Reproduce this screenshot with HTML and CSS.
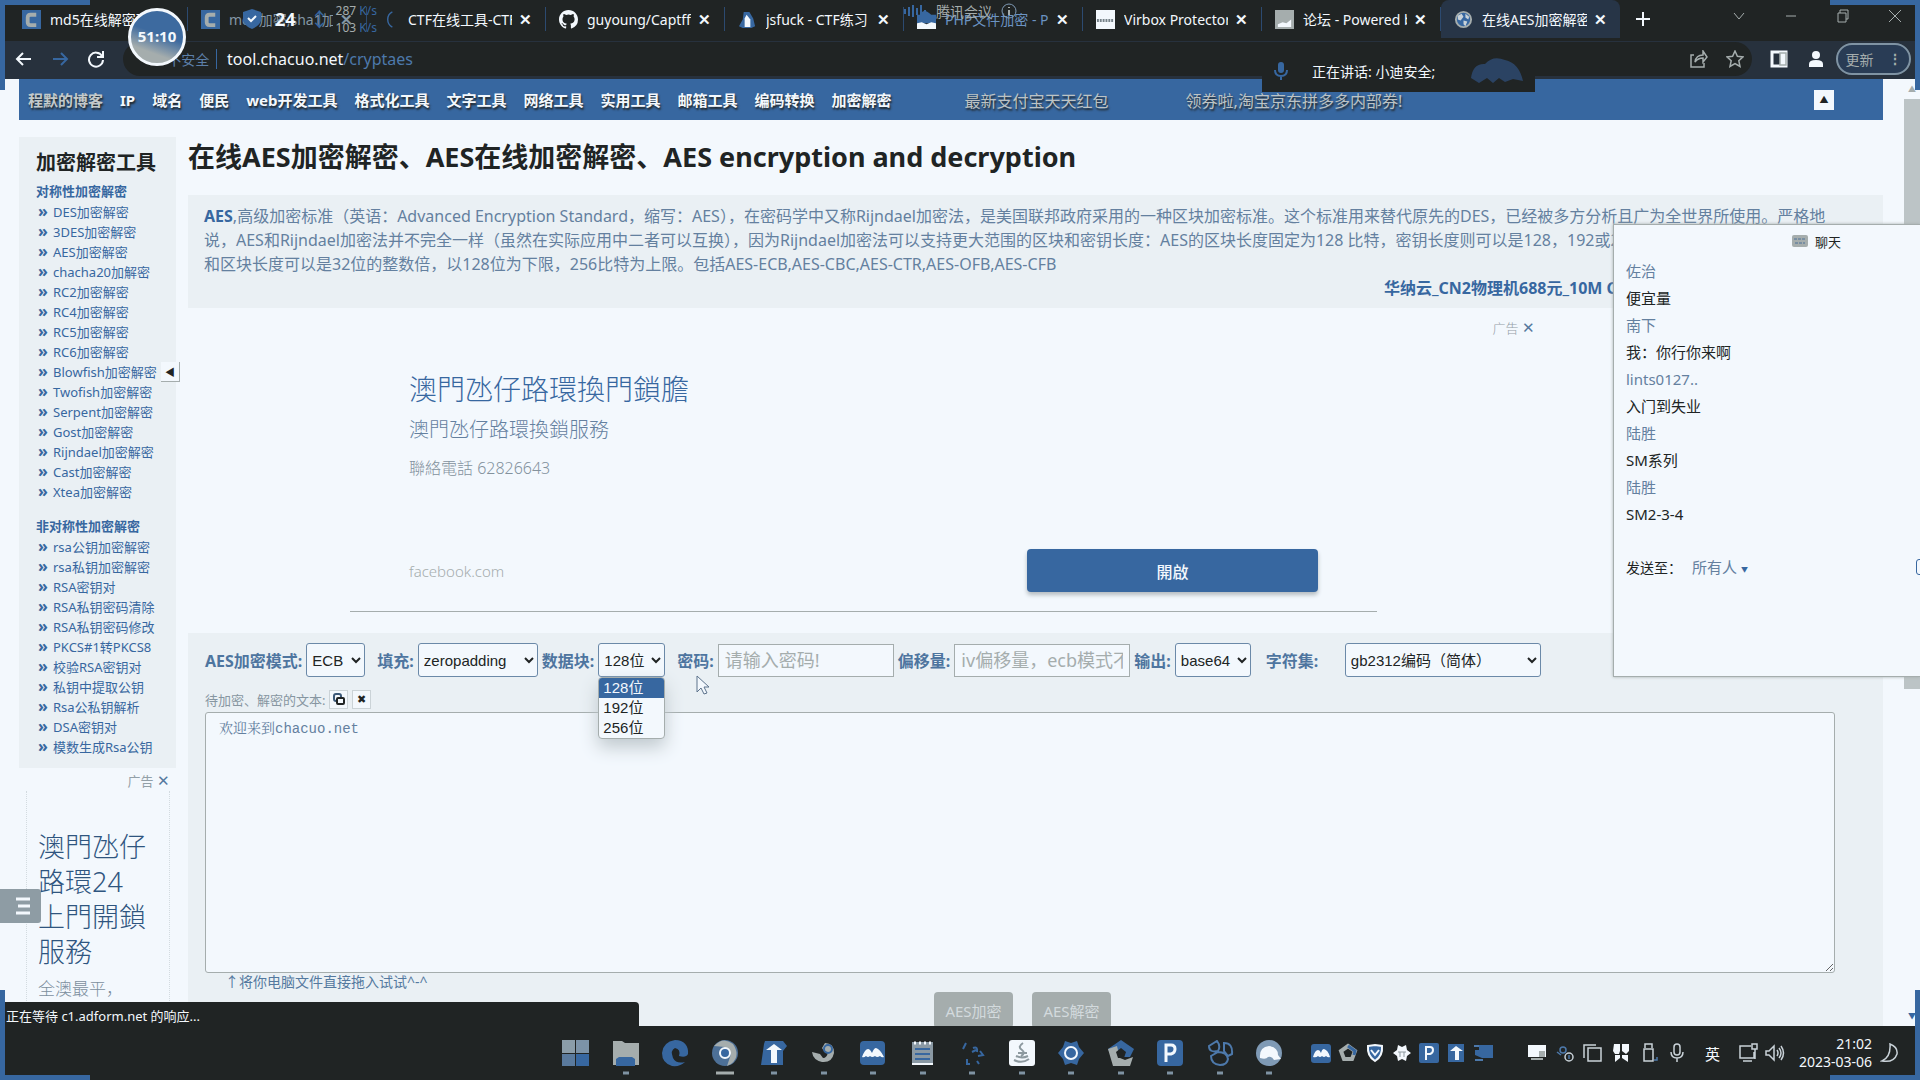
FILE: index.html
```html
<!DOCTYPE html>
<html lang="zh-CN">
<head>
<meta charset="utf-8">
<title>在线AES加密解密</title>
<link rel="stylesheet" href="styles.css">
</head>
<body>
<header class="tabstrip">
  <div class="tab"><svg class="fav" viewBox="0 0 20 20"><path fill="#3767a0" d="M0 0h20v20H0z"/><path d="M15 5H9Q6 5 6 8v5q0 3 3 3h6" fill="none" stroke="#a5adad" stroke-width="4"/></svg><span class="tab-title">md5在线解密破解</span></div>
  <div class="tab"><svg class="fav" viewBox="0 0 20 20"><path fill="#3767a0" d="M0 0h20v20H0z"/><path d="M15 5H9Q6 5 6 8v5q0 3 3 3h6" fill="none" stroke="#a5adad" stroke-width="4"/></svg><span class="tab-title dim">md5加密,sha1加</span><button class="x dim" aria-label="关闭">✕</button></div>
  <div class="tab"><svg class="fav" viewBox="0 0 20 20"><path d="M13 2A9 9 0 0 0 13 18" fill="none" stroke="#3767a0" stroke-width="1.5"/></svg><span class="tab-title">CTF在线工具-CTF</span><button class="x" aria-label="关闭">✕</button></div>
  <div class="tab"><svg class="fav" viewBox="0 0 16 16"><path fill="#f3f8fd" d="M8 0C3.58 0 0 3.58 0 8c0 3.54 2.29 6.53 5.47 7.59.4.07.55-.17.55-.38v-1.49c-2.01.37-2.53-.49-2.69-.94-.09-.23-.48-.94-.82-1.13-.28-.15-.68-.52-.01-.53.63-.01 1.08.58 1.23.82.72 1.21 1.87.87 2.33.66.07-.52.28-.87.51-1.07-1.78-.2-3.64-.89-3.64-3.95 0-.87.31-1.59.82-2.15-.08-.2-.36-1.02.08-2.12 0 0 .67-.21 2.2.82a7.6 7.6 0 0 1 4 0c1.53-1.04 2.2-.82 2.2-.82.44 1.1.16 1.92.08 2.12.51.56.82 1.27.82 2.15 0 3.07-1.87 3.75-3.65 3.95.29.25.54.73.54 1.48v2.2c0 .21.15.46.55.38A8 8 0 0 0 16 8c0-4.42-3.58-8-8-8z"/></svg><span class="tab-title">guyoung/Captfff</span><button class="x" aria-label="关闭">✕</button></div>
  <div class="tab"><svg class="fav" viewBox="0 0 20 20"><path fill="#3767a0" d="M6 2h6l4 7 2 8-4 2H5l-4-2 4-7z"/><path fill="#f3f8fd" d="M9 5l4 5v8H7V9z"/></svg><span class="tab-title">jsfuck - CTF练习</span><button class="x" aria-label="关闭">✕</button></div>
  <div class="tab"><svg class="fav" viewBox="0 0 20 20"><path fill="#3767a0" d="M3 5q4-8 12 0h5v9H0V5z"/><path fill="#f3f8fd" d="M0 14l5-1 5 2 5-2 5 1v6H0z"/></svg><span class="tab-title blue">PHP文件加密 - P</span><button class="x" aria-label="关闭">✕</button></div>
  <div class="tab"><svg class="fav" viewBox="0 0 20 20"><path fill="#f3f8fd" d="M0 0h20v20H0z"/><path d="M1 11h18" stroke="#77838a" stroke-width="3" stroke-dasharray="2 1"/></svg><span class="tab-title">Virbox Protector</span><button class="x" aria-label="关闭">✕</button></div>
  <div class="tab"><svg class="fav" viewBox="0 0 20 20"><path fill="#a5adad" d="M0 0h20v20H0z"/><path fill="#f3f8fd" d="M3 15l5-2 4 1 5-4v8H3z"/></svg><span class="tab-title">论坛 - Powered b</span><button class="x" aria-label="关闭">✕</button></div>
  <div class="tab active"><svg class="fav" viewBox="0 0 20 20"><circle cx="10" cy="10" r="8" fill="#3767a0" stroke="#a5adad" stroke-width="2"/><path fill="#c9d2d8" d="M4 6l4-2 2 3-3 4-3-1zM12 4l4 3-1 3-3-2zM10 11l4 1-2 5-2-2z"/></svg><span class="tab-title">在线AES加密解密</span><button class="x" aria-label="关闭">✕</button></div>
  <button class="newtab" aria-label="新标签页"><svg width="14" height="14" viewBox="0 0 14 14"><path d="M7 0v14M0 7h14" stroke="#f3f8fd" stroke-width="2"/></svg></button>
  <div class="window-buttons">
    <svg viewBox="0 0 14 14"><path d="M2 4l5 6 5-6"/></svg>
    <svg viewBox="0 0 14 14"><path d="M2 7h10"/></svg>
    <svg viewBox="0 0 14 14"><path d="M2 4h8v9H2zM4 4V1h8v9h-2"/></svg>
    <svg viewBox="0 0 14 14"><path d="M1 1l12 12M13 1L1 13"/></svg>
  </div>
</header>

<div class="toolbar">
  <button class="tb" aria-label="后退"><svg width="18" height="18" viewBox="0 0 18 18"><path d="M16 9H2M8 3L2 9l6 6"/></svg></button>
  <button class="tb off" aria-label="前进"><svg width="18" height="18" viewBox="0 0 18 18"><path d="M2 9h14M10 3l6 6-6 6"/></svg></button>
  <button class="tb" aria-label="刷新"><svg width="18" height="18" viewBox="0 0 18 18"><path d="M15 6A7 7 0 1 0 16 10M16 1v6h-6"/></svg></button>
  <div class="omnibox">
    <span class="insecure">▲ 不安全</span>
    <span class="url">tool.chacuo.net<span>/cryptaes</span></span>
    <svg class="share" width="18" height="18" viewBox="0 0 18 18"><path d="M4 5H1v12h13v-4M5 12q1-7 8-7V1l4 6-4 5V8q-5 0-8 4z"/></svg>
    <svg width="18" height="18" viewBox="0 0 18 18"><path d="M9 1l2.400 5.300 5.600.600-4.200 3.800 1.200 5.700L9 13.500l-5 2.900 1.200-5.700L1 6.900l5.600-.600z"/></svg>
  </div>
  <svg class="side" width="18" height="18" viewBox="0 0 18 18"><path d="M2 2h14v14H2z" stroke="#f3f8fd" stroke-width="3"/><path d="M10 3h6v12h-6z" fill="#f3f8fd"/></svg>
  <svg class="user" width="18" height="18" viewBox="0 0 18 18"><circle cx="9" cy="5" r="4"/><path d="M2 17v-3q0-4 7-4t7 4v3z"/></svg>
  <button class="update">更新 <b>⋮</b></button>
</div>

<main class="viewport">
  <nav class="sitenav">
    <a class="own" href="#">程默的博客</a><a href="#">IP</a><a href="#">域名</a><a href="#">便民</a><a href="#">web开发工具</a><a href="#">格式化工具</a><a href="#">文字工具</a><a href="#">网络工具</a><a href="#">实用工具</a><a href="#">邮箱工具</a><a href="#">编码转换</a><a href="#">加密解密</a>
    <a class="promo first" href="#">最新支付宝天天红包</a><a class="promo" href="#">领券啦,淘宝京东拼多多内部券!</a>
    <button class="collapse" aria-label="收起">▲</button>
  </nav>
  <div class="columns">
    <aside class="left">
      <section class="menu">
        <h2>加密解密工具</h2>
        <h3>对称性加密解密</h3>
        <ul>
          <li><a href="#">DES加密解密</a></li><li><a href="#">3DES加密解密</a></li><li><a href="#">AES加密解密</a></li><li><a href="#">chacha20加解密</a></li><li><a href="#">RC2加密解密</a></li><li><a href="#">RC4加密解密</a></li><li><a href="#">RC5加密解密</a></li><li><a href="#">RC6加密解密</a></li><li><a href="#">Blowfish加密解密</a></li><li><a href="#">Twofish加密解密</a></li><li><a href="#">Serpent加密解密</a></li><li><a href="#">Gost加密解密</a></li><li><a href="#">Rijndael加密解密</a></li><li><a href="#">Cast加密解密</a></li><li><a href="#">Xtea加密解密</a></li>
        </ul>
        <h3>非对称性加密解密</h3>
        <ul>
          <li><a href="#">rsa公钥加密解密</a></li><li><a href="#">rsa私钥加密解密</a></li><li><a href="#">RSA密钥对</a></li><li><a href="#">RSA私钥密码清除</a></li><li><a href="#">RSA私钥密码修改</a></li><li><a href="#">PKCS#1转PKCS8</a></li><li><a href="#">校验RSA密钥对</a></li><li><a href="#">私钥中提取公钥</a></li><li><a href="#">Rsa公私钥解析</a></li><li><a href="#">DSA密钥对</a></li><li><a href="#">模数生成Rsa公钥</a></li>
        </ul>
        <button class="fold" aria-label="折叠">◀</button>
      </section>
      <section class="side-ad">
        <div class="adtag">广告 <b>✕</b></div>
        <div class="side-ad-box">
          <p class="side-ad-title">澳門氹仔<br>路環24<br>上門開鎖<br>服務</p>
          <p class="side-ad-text">全澳最平，</p>
        </div>
      </section>
    </aside>
    <article class="content">
      <h1>在线AES加密解密、AES在线加密解密、AES encryption and decryption</h1>
      <section class="intro">
        <p><strong>AES</strong>,高级加密标准（英语：Advanced Encryption Standard，缩写：AES），在密码学中又称Rijndael加密法，是美国联邦政府采用的一种区块加密标准。这个标准用来替代原先的DES，已经被多方分析且广为全世界所使用。严格地<br>说，AES和Rijndael加密法并不完全一样（虽然在实际应用中二者可以互换），因为Rijndael加密法可以支持更大范围的区块和密钥长度：AES的区块长度固定为128 比特，密钥长度则可以是128，192或256比特；<br>和区块长度可以是32位的整数倍，以128位为下限，256比特为上限。包括AES-ECB,AES-CBC,AES-CTR,AES-OFB,AES-CFB</p>
        <a class="cloud" href="#">华纳云_CN2物理机688元_10M CN2</a>
      </section>
      <section class="banner">
        <div class="adtag">广告 <b>✕</b></div>
        <div class="banner-body">
          <p class="b-title">澳門氹仔路環換門鎖膽</p>
          <p class="b-sub">澳門氹仔路環換鎖服務</p>
          <p class="b-tel">聯絡電話 62826643</p>
          <div class="b-foot"><span>facebook.com</span><button>開啟</button></div>
        </div>
      </section>
      <form class="tool">
        <div class="fields">
          <label for="mode">AES加密模式:</label><select id="mode" class="w60 wide"><option>ECB</option></select>
          <label for="pad">填充:</label><select id="pad" class="w120"><option>zeropadding</option></select>
          <label for="block">数据块:</label>
          <div class="combo wide"><select id="block" class="w68"><option>128位</option></select>
            <ul class="options"><li class="on">128位</li><li>192位</li><li>256位</li></ul></div>
          <label for="pwd">密码:</label><input id="pwd" placeholder="请输入密码!">
          <label for="iv">偏移量:</label><input id="iv" placeholder="iv偏移量，ecb模式不用">
          <label for="out">输出:</label><select id="out" class="w76 wide"><option>base64</option></select>
          <label for="cs" class="charset">字符集:</label><select id="cs" class="w196"><option>gb2312编码（简体）</option></select>
        </div>
        <div class="source"><label for="src">待加密、解密的文本:</label>
          <button type="button" aria-label="复制"><svg width="12" height="12" viewBox="0 0 12 12"><rect x="1" y="1" width="7" height="7" rx="2" fill="none" stroke="#3b5878" stroke-width="2"/><rect x="4" y="5" width="7" height="6" rx="1" fill="#f3f8fd" stroke="#202424" stroke-width="2"/></svg></button>
          <button type="button" aria-label="清空">✖</button></div>
        <textarea id="src">欢迎来到chacuo.net</textarea>
        <p class="hint">↑将你电脑文件直接拖入试试^-^</p>
        <div class="actions"><button type="button">AES加密</button><button type="button">AES解密</button></div>
      </form>
    </article>
  </div>
  <div class="scrollbar"><span>▲</span><i></i><span class="down">▼</span></div>
  <button class="float-menu" aria-label="目录"><svg width="14" height="18" viewBox="0 0 14 18"><path d="M0 2h14M2 9h12M0 16h14" stroke="#f3f8fd" stroke-width="3"/></svg></button>
  <div class="status">正在等待 c1.adform.net 的响应...</div>
</main>

<footer class="taskbar">
  <div class="apps">
    <svg viewBox="0 0 28 38"><path fill="#8b9da9" d="M0 0h13v13H0z"/><path fill="#7c93a8" d="M14 0h13v13H14z"/><path fill="#5a7a9d" d="M0 14h13v12H0z"/><path fill="#3767a0" d="M14 14h13v12H14z"/></svg>
    <svg viewBox="0 0 28 38"><path fill="#a5adad" d="M1 1h9l3 2h14v22H1z"/><path fill="#3767a0" d="M4 26v-7l3-2h13l3 2v7z"/><path class="dot" d="M11 33h6"/></svg>
    <svg viewBox="0 0 28 38"><path fill="#3767a0" d="M14 0C23 0 28 6 27 14q-2 4-9 2 2-7-4-8-5 2-2 10 3 6 12 4-5 5-13 4Q1 23 1 13 2 2 14 0z"/></svg>
    <svg viewBox="0 0 28 38"><circle cx="14" cy="13" r="13" fill="#4d7097"/><path fill="#a5adad" d="M3 6Q12-4 22 4q8 12-2 20l-4 2 4-12L14 7z"/><circle cx="14" cy="13" r="5" fill="#3767a0" stroke="#f3f8fd" stroke-width="2"/><path d="M5 33h18" stroke="#a5adad" stroke-width="3"/></svg>
    <svg viewBox="0 0 28 38"><path fill="#3767a0" d="M5 1h18l4 5-4 5v14H1L4 4z"/><path fill="#f3f8fd" d="M14 4l8 6h-5v13h-6V10H6z"/><path class="dot" d="M11 33h6"/></svg>
    <svg viewBox="0 0 28 38"><path fill="#a5adad" d="M15 3q9 0 9 10-2 10-12 9Q3 20 2 12l8 2 3 4q4 0 5-6-4 0-6-4z"/><circle cx="18" cy="9" r="4" fill="none" stroke="#3767a0" stroke-width="2"/><path class="dot" d="M11 33h6"/></svg>
    <svg viewBox="0 0 28 38"><rect x="1" y="1" width="25" height="24" rx="4" fill="#3767a0"/><path fill="#f3f8fd" d="M3 17q3-8 6-8 2 0 4 4 2-5 4-5 4 1 8 9-2 1-4-1-3 2-5 0-3 2-5 0-2 2-4 0-2 2-4 1z"/><path class="dot" d="M11 33h6"/></svg>
    <svg viewBox="0 0 28 38"><path fill="#8a99a4" d="M3 2h21v23H3z"/><path d="M5 3h2m3 0h2m3 0h2m3 0h2" stroke="#f3f8fd" stroke-width="3"/><path d="M6 9h15M6 14h15M6 19h15" stroke="#3767a0" stroke-width="2"/><path d="M3 24h21" stroke="#f3f8fd" stroke-width="2"/><path class="dot" d="M11 33h6"/></svg>
    <svg viewBox="0 0 28 38"><path d="M8 3L5 9m10-1q5-2 4 4m-5 0l4-2m4 1l3 4-5 1M9 19v4m-1 1h4m7-3l2 3" fill="none" stroke="#3767a0" stroke-width="2"/><path class="dot" d="M11 33h6"/></svg>
    <svg viewBox="0 0 28 38"><rect x="1" width="26" height="26" rx="3" fill="#f3f8fd"/><path d="M15 3q-6 4-1 7 4 3-1 6M8 16q6 3 12 0M6 20q8 4 15-1M10 13h9" fill="none" stroke="#8d999f" stroke-width="2"/><path class="dot" d="M11 33h6"/></svg>
    <svg viewBox="0 0 28 38"><path fill="#3767a0" d="M8 1l6 2 6-2 2 6 5 6-5 6-2 6-6-2-6 2-2-6-5-6 5-6z"/><circle cx="14" cy="13" r="6" fill="#3767a0" stroke="#f3f8fd" stroke-width="2"/><path class="dot" d="M11 33h6"/></svg>
    <svg viewBox="0 0 28 38"><path fill="#3767a0" d="M14 0l13 9-4 8H5L1 9z"/><path fill="#a5adad" d="M1 9l9-3 3 12 5 2 8-3-3 9H6z"/><path fill="#202424" d="M14 8l5 4-2 6h-6l-2-6z"/><path class="dot" d="M11 33h6"/></svg>
    <svg viewBox="0 0 28 38"><rect x="1" width="26" height="26" rx="4" fill="#3767a0"/><path d="M10 22V5h5q4 0 4 4t-4 5h-5" fill="none" stroke="#f3f8fd" stroke-width="3"/><path class="dot" d="M11 33h6"/></svg>
    <svg viewBox="0 0 28 38"><path d="M11 1q4 5 1 10Q3 13 3 6zM18 3q9 0 8 11l-4 2-4-5zM12 12q9 0 10 7-1 6-8 6-9-1-9-9z" fill="none" stroke="#4d79ab" stroke-width="2"/><path class="dot" d="M11 33h6"/></svg>
    <svg viewBox="0 0 28 38"><circle cx="14" cy="13" r="13" fill="#7f9ab5"/><path fill="#f3f8fd" d="M5 18q-1-11 9-12 9 1 9 9l3 4-7 1q-2-4-6-3-2 3-8 1z"/><path class="dot" d="M11 33h6"/></svg>
  </div>
  <div class="tray">
    <svg viewBox="0 0 20 20"><rect width="20" height="19" y="1" rx="3" fill="#3767a0"/><path fill="#f3f8fd" d="M2 14q2-7 5-7 2 0 3 3 1-4 3-4 4 1 6 8-2 1-4-1-2 2-4 0-2 2-4 0-2 2-5 1z"/></svg>
    <svg viewBox="0 0 20 20"><path d="M10 3l7 5-3 8H6L3 8z" fill="#202424" stroke="#a5adad" stroke-width="4"/><path d="M10 3l7 5-1 4" fill="none" stroke="#3767a0" stroke-width="3"/></svg>
    <svg viewBox="0 0 20 20"><path d="M3 3l7-1 7 1q1 10-7 15Q2 13 3 3z" fill="#3767a0" stroke="#f3f8fd" stroke-width="2"/><path d="M6 7l4 5 4-5" fill="none" stroke="#f3f8fd" stroke-width="2"/></svg>
    <svg viewBox="0 0 20 20"><path fill="#f3f8fd" d="M6 2l4 2 4-2 1 5 4 3-4 3-1 5-4-2-4 2-1-5-4-3 4-3z"/><path d="M6 9h8M8 9v5m4-5v5" stroke="#8d999f" stroke-width="1"/></svg>
    <svg viewBox="0 0 20 20"><rect width="20" height="20" rx="2" fill="#3767a0"/><path d="M7 17V4h4q3 0 3 3t-3 4H7" fill="none" stroke="#f3f8fd" stroke-width="2"/></svg>
    <svg viewBox="0 0 20 20"><path fill="#3767a0" d="M2 1h16v18H2z"/><path fill="#f3f8fd" d="M10 3l7 5h-4v9H9V8H4z"/></svg>
    <svg viewBox="0 0 20 20"><path fill="#3767a0" d="M6 2h14v13H9L2 12V7h4z"/><path d="M1 3h5M2 17h8" stroke="#4d79ab" stroke-width="2"/></svg>
  </div>
  <div class="tray second">
    <svg viewBox="0 0 20 20"><path fill="#f3f8fd" d="M1 2h18v12H1z"/><path fill="#a5adad" d="M12 8h6v6h-6zM4 15h12v2H4z"/></svg>
    <svg viewBox="0 0 20 20"><circle cx="8" cy="7" r="3" class="ln sky"/><circle cx="14" cy="14" r="4" class="ln"/><path d="M2 9l4 3M14 12v4" class="ln sky"/></svg>
    <svg viewBox="0 0 20 20"><path d="M1 15V2h12M5 5h13v13H5z" class="ln"/></svg>
    <svg viewBox="0 0 20 20"><path fill="#f3f8fd" d="M3 1h6v7l-1 3H4L2 8zM11 1h7v7l-3 3-4-3zM4 12h5v3l-5 4zM11 12h6v7l-6-4z"/></svg>
    <svg viewBox="0 0 20 20"><path d="M6 5V1h7v4M5 6h9v12H5z" class="ln"/><path d="M15 17h3v-3" class="ln sky"/></svg>
    <svg viewBox="0 0 20 20"><rect x="7" y="1" width="6" height="11" rx="3" class="ln"/><path d="M4 9q0 6 6 6t6-6M10 15v4" class="ln"/></svg>
  </div>
  <span class="ime">英</span>
  <div class="tray net">
    <svg viewBox="0 0 20 20"><path d="M13 3H2v12h14V9M5 18h9M14 1h5v5h-5zM17 6v10" class="ln"/></svg>
    <svg viewBox="0 0 20 20"><path d="M1 8h3l5-5v14l-5-5H1zM12 7q2 3 0 6M14 5q4 5 0 10M16 3q5 7 0 14" class="ln"/></svg>
  </div>
  <time>21:02<br>2023-03-06</time>
  <svg class="moon" viewBox="0 0 20 20"><path d="M10 1q8 3 7 10-3 9-15 7 9-4 8-17z" class="ln"/></svg>
</footer>

<section class="chat">
  <h4><svg width="16" height="14" viewBox="0 0 16 14"><rect width="16" height="12" rx="2" fill="#a5adad"/><path d="M2 4h12M3 8h10" stroke="#4d7097" stroke-dasharray="3 1"/></svg>聊天</h4>
  <dl><dt>佐治</dt><dd>便宜量</dd><dt>南下</dt><dd>我：你行你来啊</dd><dt>lints0127..</dt><dd>入门到失业</dd><dt>陆胜</dt><dd>SM系列</dd><dt>陆胜</dt><dd>SM2-3-4</dd></dl>
  <div class="sendto">发送至：<button>所有人 <small>▼</small></button><i></i></div>
</section>

<div class="speaker">
  <svg width="16" height="18" viewBox="0 0 16 18"><rect x="5" width="6" height="11" rx="3" fill="#3767a0"/><path d="M2 8q0 6 6 6t6-6M8 14v4" fill="none" stroke="#3767a0" stroke-width="2"/></svg>
  <span>正在讲话: 小迪安全;</span>
  <svg class="avatar" width="52" height="26" viewBox="0 0 52 26"><path fill="#2b4363" d="M0 20Q2 5 14 6q8-9 20-4 14 3 18 21l-10-2-8 3-6-4-6 5-6-5-8 5z"/></svg>
</div>
<div class="meeting"><svg width="24" height="18" viewBox="0 0 24 18"><path d="M2 7v5m4-7v9m4-11v12m4-9v7m4-10v13m4-8v5" stroke="#3767a0" stroke-width="2"/></svg>腾讯会议<svg width="16" height="16" viewBox="0 0 16 16"><circle cx="8" cy="8" r="7" fill="none" stroke="#7f9ab5"/><path d="M8 4v1m0 2v5" stroke="#a5adad" stroke-width="2"/></svg></div>
<div class="netspeed">
  <svg width="18" height="20" viewBox="0 0 18 20"><path fill="#3767a0" d="M9 0l9 3v9q-2 5-9 8-7-3-9-8V3z"/><path d="M5 9l3 3 5-5" fill="none" stroke="#f3f8fd" stroke-width="2"/></svg>
  <strong>24</strong><i>↕</i><span>287 <em>K/s</em><br>103 <em>K/s</em></span>
</div>
<div class="timer">51:10</div>
<svg class="cursor" width="14" height="20" viewBox="0 0 14 20"><path d="M1 1v16l4-4 3 6 3-1-3-6h5z" fill="#f3f8fd" stroke="#5d738c"/></svg>
<i class="corner tl"></i><i class="corner tr"></i><i class="corner bl"></i><i class="corner br"></i>
</body>
</html>
```
FILE: styles.css
```css
:root {
  --paper: #f3f8fd;
  --panel: #eaf0f4;
  --blue: #3767a0;
  --dark: #202424;
  --grey: #a5adad;
  --slate: #64809f;
}
* { box-sizing: border-box; }
body {
  position: relative;
  display: flex;
  flex-direction: column;
  height: 100vh;
  margin: 0;
  overflow: hidden;
  background: var(--paper);
  color: var(--dark);
  font-family: "Noto Sans", "Noto Sans CJK SC", sans-serif;
  font-size: 16px;
}
h1, h2, h3, h4, p, ul, dl, dd { margin: 0; padding: 0; }
ul { list-style: none; }
a { color: var(--blue); text-decoration: none; }
button { padding: 0; border: 0; background: none; color: inherit; font: inherit; }
svg { flex: none; }

/* browser chrome */
.tabstrip { display: flex; align-items: center; flex: none; height: 41px; padding: 0 0 3px 9px; background: var(--dark); color: var(--paper); font-size: 14px; }
.tab { display: flex; align-items: center; flex: 0 1 179px; min-width: 0; height: 24px; padding: 0 13px; border-right: 1px solid #2c4a70; }
.tab.active { height: 38px; border: 0; border-radius: 8px 8px 0 0; background: #273547; }
.fav { width: 19px; height: 19px; margin-right: 9px; }
.tab-title { flex: 1; overflow: hidden; white-space: nowrap; }
.dim { color: #8497a6; }
.blue { color: #6b93c2; }
.x { width: 14px; margin-left: 6px; font-size: 15px; font-weight: bold; }
.newtab { margin-left: 16px; line-height: 0; }
.window-buttons { display: flex; gap: 38px; margin: -6px 18px 0 auto; }
.window-buttons svg { width: 14px; height: 14px; fill: none; stroke: var(--grey); }
.toolbar { display: flex; align-items: center; flex: none; height: 38px; padding: 0 9px 3px 15px; background: #27313d; }
.toolbar svg { fill: none; stroke: var(--grey); stroke-width: 1.5; }
.tb { width: 18px; height: 18px; margin-right: 18px; line-height: 0; }
.tb svg { stroke: var(--paper); stroke-width: 2; }
.tb.off svg { stroke: var(--blue); }
.omnibox { display: flex; align-items: center; flex: 1; height: 34px; padding: 0 8px 0 20px; border-radius: 17px; background: var(--dark); }
.insecure { width: 74px; margin-right: 10px; border-right: 1px solid var(--blue); color: #5c7fa8; font-size: 14px; text-align: center; white-space: nowrap; }
.url { color: var(--paper); font-size: 16px; }
.url span { color: #4d79ab; }
.share { margin: 0 18px 0 auto; }
.side { margin: 0 19px 0 18px; }
.toolbar .user { margin-right: 11px; fill: var(--paper); stroke: none; }
.update { display: flex; align-items: center; justify-content: center; gap: 14px; width: 75px; height: 32px; border: 2px solid #7f93a3; border-radius: 16px; background: #293c55; color: var(--grey); font-size: 14px; }

/* page */
.viewport { position: relative; flex: 1; min-height: 0; overflow: hidden; }
.sitenav { display: flex; align-items: center; gap: 17px; height: 41px; margin: 0 37px 0 19px; padding: 0 49px 0 9px; background: var(--blue); font-size: 15px; font-weight: bold; white-space: nowrap; }
.sitenav a { color: var(--paper); text-shadow: 1px 2px 2px var(--dark); }
.sitenav a.own { color: #c3cacb; }
.sitenav a.promo { color: #bcc3c5; font-size: 16px; font-weight: normal; margin-right: 60px; }
.sitenav a.first { margin-left: 56px; }
.collapse { width: 20px; height: 20px; margin-left: auto; background: var(--paper); font-size: 9px; line-height: 20px; }
.columns { display: flex; gap: 12px; margin: 17px 37px 0 19px; }
.left { flex: 0 0 157px; }
.menu { position: relative; padding: 12px 0 11px 17px; background: var(--panel); white-space: nowrap; }
.menu h2 { font-size: 20px; line-height: 28px; }
.menu h3 { padding-top: 4px; color: var(--blue); font-size: 13px; line-height: 20px; }
.menu ul { padding-top: 1px; padding-bottom: 8px; font-size: 13px; line-height: 20px; }
.menu ul + h3 { padding-top: 6px; }
.menu li { padding-left: 2px; }
.menu ul + h3 + ul { padding-bottom: 0; }
.menu li::before { content: "»"; display: inline-block; width: 15px; color: var(--blue); font-size: 16px; font-weight: bold; line-height: 16px; }
.fold { position: absolute; right: -4px; top: 225px; width: 19px; height: 20px; border: solid var(--grey); border-width: 0 1px 1px 0; background: var(--paper); font-size: 10px; }
.adtag { color: #93a0a8; font-size: 13px; line-height: 20px; text-align: right; }
.adtag b { color: #55799f; font-size: 15px; font-weight: normal; }
.side-ad { padding: 2px 6px 0 7px; }
.side-ad-box { padding: 38px 0 40px 11px; border: dotted #d3dbe0; border-width: 0 1px; color: #2f557f; font-family: "Noto Sans", "Noto Sans CJK TC", sans-serif; font-weight: 300; }
.side-ad-title { font-size: 27px; line-height: 35px; }
.side-ad-text { margin-top: 6px; color: #7c8f9e; font-size: 17px; line-height: 28px; white-space: nowrap; }
.content { flex: 1; min-width: 0; }
h1 { font-size: 27px; line-height: 40px; white-space: nowrap; }
.intro { height: 113px; margin-top: 18px; padding: 9px 16px 8px; background: var(--panel); color: var(--slate); line-height: 24px; white-space: nowrap; }
.intro strong { color: var(--blue); }
.cloud { display: block; margin-left: 1180px; font-weight: bold; }
.banner { padding: 9px 0 0; height: 325px; font-family: "Noto Sans", "Noto Sans CJK TC", sans-serif; font-weight: 300; }
.banner .adtag { width: 1347px; }
.banner-body { width: 1027px; margin-left: 162px; padding: 31px 59px 19px; border-bottom: 1px solid var(--grey); color: #64809f; }
.b-title { color: var(--blue); font-size: 28px; line-height: 40px; }
.b-sub { margin-top: 6px; font-size: 20px; line-height: 30px; }
.b-tel { margin-top: 9px; color: #83929d; font-size: 16px; line-height: 28px; }
.b-foot { display: flex; align-items: center; justify-content: space-between; margin-top: 67px; color: var(--grey); font-size: 15px; }
.b-foot button { width: 291px; height: 43px; border-radius: 4px; background: var(--blue); box-shadow: 0 3px 4px #b4bcc0; color: var(--paper); font-size: 16px; font-weight: 500; }
.tool { padding: 10px 48px 20px 17px; background: var(--panel); }
.fields { display: flex; align-items: center; gap: 4px; height: 34px; white-space: nowrap; }
.fields label { color: #4e759f; font-weight: bold; }
.fields select { height: 34px; padding: 0 0 0 1px; border: 1px solid #6b89a8; border-radius: 3px; background: var(--paper); color: var(--dark); font-family: "Liberation Sans", "Noto Sans CJK SC", sans-serif; font-size: 15px; }
.fields input { width: 176px; height: 33px; padding: 0 6px; border: 1px solid var(--grey); background: var(--paper); font: 18px "Noto Sans", "Noto Sans CJK SC", sans-serif; }
.fields input::placeholder { color: var(--grey); }
.fields .w60 { width: 59px; }
.fields .w68 { width: 67px; }
.fields .w76 { width: 76px; }
.fields .w120 { width: 120px; }
.fields .w196 { width: 196px; }
.fields .wide { margin-right: 8px; }
.fields .charset { width: 78px; padding-left: 3px; }
.combo { position: relative; }
.options { position: absolute; z-index: 2; top: 34px; left: 0; width: 67px; border: 1px solid var(--grey); border-radius: 4px; overflow: hidden; background: var(--paper); box-shadow: 0 8px 18px #bfc8cd; font-family: "Liberation Sans", "Noto Sans CJK SC", sans-serif; font-size: 15px; line-height: 20px; }
.options li { padding-left: 4px; }
.options .on { background: var(--blue); color: var(--paper); }
.source { display: flex; align-items: center; gap: 4px; height: 20px; margin-top: 12px; color: #8796a1; font-size: 13px; }
.source button { width: 19px; height: 19px; border: 1px solid #cbd3d7; background: var(--paper); color: var(--dark); font-size: 11px; line-height: 0; }
textarea { display: block; width: 100%; height: 261px; margin-top: 3px; padding: 4px 13px; border: 1px solid var(--grey); border-radius: 3px; background: var(--paper); color: var(--slate); font: 14px "Liberation Mono", "Noto Serif CJK SC", "Noto Sans CJK SC", monospace; resize: both; }
.hint { padding-left: 20px; color: #54799f; font-size: 14px; line-height: 18px; }
.actions { display: flex; gap: 19px; margin: 1px 0 0 729px; }
.actions button { width: 79px; height: 36px; border-radius: 4px; background: var(--grey); color: #d3dadd; font-size: 15px; }
.scrollbar { position: absolute; top: 0; right: 0; bottom: 0; display: flex; flex-direction: column; width: 16px; background: var(--paper); color: var(--grey); font-size: 8px; line-height: 20px; text-align: center; }
.scrollbar i { height: 590px; background: #bcc4c6; }
.scrollbar .down { margin-top: auto; color: var(--blue); }
.float-menu { position: absolute; left: 0; top: 810px; width: 41px; height: 34px; padding-left: 4px; border-radius: 0 3px 3px 0; background: #8e9ca4; line-height: 0; }
.status { position: absolute; left: 0; bottom: 0; width: 639px; height: 24px; padding-left: 6px; border-radius: 0 4px 0 0; background: var(--dark); color: var(--paper); font-size: 13px; line-height: 28px; }

/* taskbar */
.taskbar { display: flex; align-items: center; flex: none; height: 54px; background: var(--dark); color: var(--paper); font-size: 14px; }
.apps { display: flex; justify-content: space-between; width: 721px; margin-left: 562px; }
.apps svg { width: 28px; height: 38px; margin-top: 12px; }
.dot { stroke: #7f93a3; stroke-width: 3; }
.tray { display: flex; gap: 7px; margin-left: 28px; }
.tray svg, .moon { width: 20px; height: 20px; }
.tray.second { gap: 8px; margin-left: 34px; }
.ln { fill: none; stroke: #c9d2d8; stroke-width: 1.5; }
.ln.sky { stroke: #4d79ab; }
.ime { margin-left: 18px; font-size: 15px; }
.tray.net { margin-left: 18px; }
time { margin-left: auto; font-size: 14px; line-height: 18px; text-align: right; }
.moon { margin: 0 20px 0 8px; }

/* meeting overlays */
.chat { position: absolute; right: 0; top: 224px; width: 307px; height: 453px; padding: 7px 0 0 12px; overflow: hidden; border: solid var(--grey); border-width: 1px 0 1px 1px; background: var(--paper); box-shadow: 0 0 3px var(--grey); }
.chat h4 { display: flex; align-items: center; gap: 7px; margin-left: 166px; font-size: 13px; font-weight: normal; line-height: 20px; }
.chat dl { margin-top: 6px; font-size: 15px; line-height: 27px; }
.chat dt { color: var(--slate); }
.sendto { display: flex; align-items: center; margin-top: 28px; font-size: 14px; }
.sendto button { margin-left: 10px; color: var(--slate); font-size: 15px; }
.sendto small { color: var(--blue); font-size: 7px; vertical-align: middle; }
.sendto i { width: 18px; height: 16px; margin: 0 -14px 0 auto; border: 1px solid var(--blue); border-radius: 3px; }
.speaker { position: absolute; left: 1262px; top: 53px; display: flex; align-items: center; width: 273px; height: 39px; padding: 0 0 3px 11px; background: var(--dark); color: var(--paper); font-size: 14px; }
.speaker span { margin-left: 23px; white-space: nowrap; }
.avatar { margin-left: auto; margin-right: 12px; }
.meeting { position: absolute; left: 903px; top: 1px; display: flex; align-items: center; gap: 9px; color: var(--grey); font-size: 14px; }
.netspeed { position: absolute; left: 243px; top: 2px; display: flex; align-items: center; gap: 14px; color: var(--grey); font-size: 12px; line-height: 17px; }
.netspeed strong { color: var(--paper); font-size: 18px; }
.netspeed i { margin-right: -8px; color: var(--blue); font-size: 20px; font-style: normal; }
.netspeed em { color: var(--blue); font-style: normal; }
.timer { position: absolute; left: 128px; top: 8px; width: 58px; height: 58px; border: 3px solid var(--paper); border-radius: 50%; background: linear-gradient(200deg, #3d6a9f 45%, #a5adad 75%); color: var(--paper); font-size: 15px; font-weight: bold; line-height: 51px; text-align: center; }
.cursor { position: absolute; left: 696px; top: 675px; }
.corner { position: absolute; width: 90px; height: 90px; border: 0 solid var(--blue); pointer-events: none; }
.tl { left: 0; top: 0; border-width: 5px 0 0 5px; }
.tr { right: 0; top: 0; border-width: 5px 5px 0 0; }
.bl { left: 0; bottom: 0; border-width: 0 0 5px 5px; }
.br { right: 0; bottom: 0; border-width: 0 5px 5px 0; }
```
